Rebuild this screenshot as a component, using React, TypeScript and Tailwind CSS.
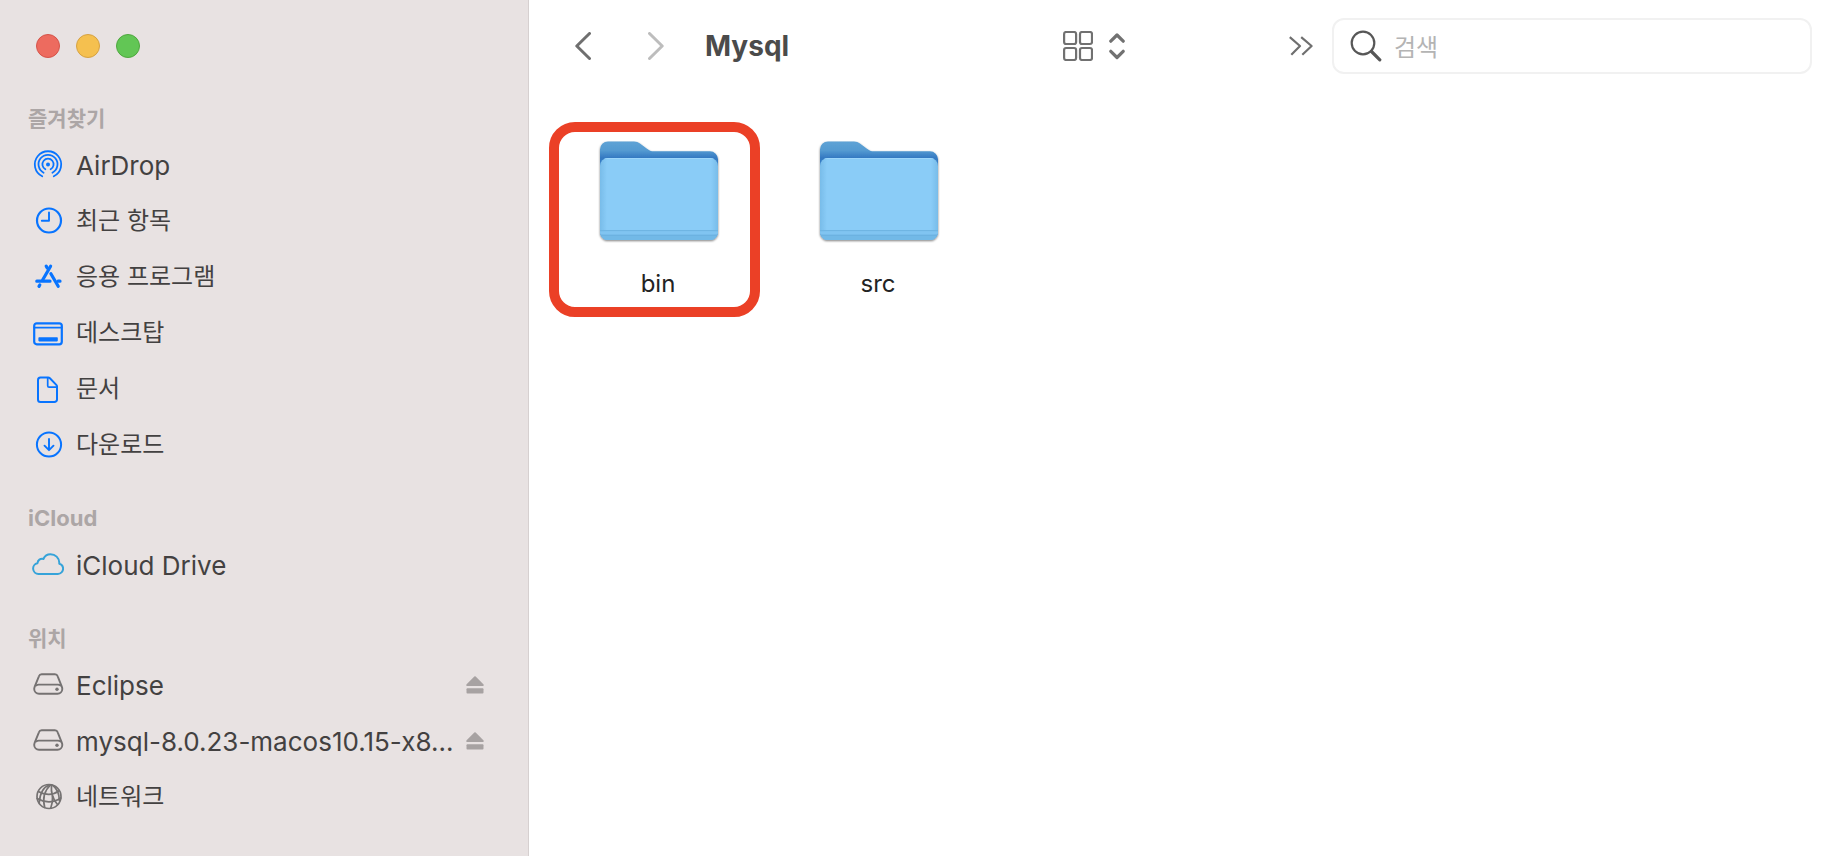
import type { ReactNode } from "react";
import { clsx } from "clsx";

type Item = {
  label: string;
  icon: ReactNode;
  latin?: boolean;
  ejectable?: boolean;
};

type Section = {
  title: string;
  latin?: boolean;
  items: Item[];
};

function Icon({ children, className }: { children: ReactNode; className?: string }) {
  return (
    <svg
      viewBox="0 0 32 32"
      fill="none"
      stroke="currentColor"
      strokeWidth="2.2"
      strokeLinecap="round"
      strokeLinejoin="round"
      className={clsx("size-8 shrink-0", className)}
      aria-hidden="true"
    >
      {children}
    </svg>
  );
}

function AirDropIcon() {
  return (
    <Icon className="text-[#0874ff]">
      <g strokeWidth="1.8">
        <path d="M10.2 27.3A13.200 13.200 0 1 1 21.800 27.300" />
        <path d="M11.600 23.700A9.500 9.500 0 1 1 20.400 23.700" />
        <path d="M13.400 20.200A5.600 5.600 0 1 1 18.600 20.200" />
      </g>
      <circle cx="16" cy="15.400" r="2" fill="currentColor" stroke="none" />
    </Icon>
  );
}

function ClockIcon() {
  return (
    <Icon className="text-[#0874ff]">
      <circle cx="17" cy="15.500" r="12" />
      <path d="M17 7.500v8.300H9.800" strokeWidth="1.900" />
    </Icon>
  );
}

function AppsIcon() {
  return (
    <Icon className="text-[#0874ff]">
      <g strokeWidth="3.200">
        <path d="M4.800 20.200h13.200M26 20.200h2" />
        <path d="M18.600 5.200L10.600 19" />
        <path d="M14.200 5.200l1 1.600M18.900 12.700L26.200 25.300" />
        <path d="M7.800 24l-.8 1.400" />
      </g>
    </Icon>
  );
}

function DesktopIcon() {
  return (
    <Icon className="text-[#0874ff]">
      <rect x="2.200" y="6.300" width="27.600" height="21" rx="2.500" />
      <path d="M2.500 10.600h27" strokeWidth="1.900" />
      <rect x="6.400" y="20.200" width="19.400" height="4.200" rx="0.800" fill="currentColor" stroke="none" />
    </Icon>
  );
}

function DocumentIcon() {
  return (
    <Icon className="text-[#0874ff]">
      <path
        d="M8.500 4.600h7.600c.8 0 1.300.2 1.800.7l6.400 6.600c.5.500.7 1 .7 1.700v12.800a2.600 2.600 0 0 1-2.600 2.600H8.500A2.600 2.600 0 0 1 6 26.400V7.200A2.600 2.600 0 0 1 8.500 4.600z"
        strokeWidth="2"
      />
      <path d="M15.700 4.800v8c0 .9.500 1.400 1.400 1.400h7.600" strokeWidth="1.700" />
    </Icon>
  );
}

function DownloadIcon() {
  return (
    <Icon className="text-[#0874ff]">
      <circle cx="17" cy="15.500" r="12.100" strokeWidth="2" />
      <path d="M17 10v10.700M12.500 16.700l4.500 4.500 4.500-4.500" strokeWidth="1.900" />
    </Icon>
  );
}

function CloudIcon() {
  return (
    <Icon className="text-[#36a3d9]">
      <path
        d="M6.500 24.900a5.400 5.400 0 0 1-1-10.700c.2-3 2.900-5 5.900-4.200C12.700 7 15.400 5.200 18.500 5.200c4.900 0 8.600 3.700 8.800 8.500v1c2.300.7 3.800 2.700 3.800 5a5.200 5.200 0 0 1-5.200 5.200z"
        strokeWidth="2"
      />
    </Icon>
  );
}

function DriveIcon() {
  return (
    <Icon className="text-[#757272]">
      <path
        d="M9.800 5.300h13a3 3 0 0 1 2.900 2l4 10c.4 1 .6 1.800.6 2.800A4.800 4.800 0 0 1 25.500 24.800H7a4.800 4.800 0 0 1-4.800-4.700c0-1 .2-1.800.6-2.800l4.100-10a3 3 0 0 1 2.900-2z"
        strokeWidth="1.900"
      />
      <path d="M4 16.500c.9-.6 1.700-.9 2.700-.9h19.200c1 0 1.800.3 2.700.9" strokeWidth="1.900" />
      <circle cx="25" cy="20.300" r="1.700" fill="currentColor" stroke="none" />
    </Icon>
  );
}

function GlobeIcon() {
  return (
    <Icon className="text-[#757272]">
      <g strokeWidth="1.700">
        <circle cx="17" cy="15.500" r="12" />
        <path d="M19.500 4C18.800 11 20.600 18 25.500 23.500" />
        <path d="M18.500 4C12 10 10.500 18 12.700 26.500" />
        <path d="M17.500 4C11.500 6 8 11 7.300 21.500" />
        <path d="M20.500 4.200c4 2.600 6.600 7 6.900 15.500" />
        <path d="M20.500 15c.4 4.500-.3 8.500-1.800 12.200" />
        <path d="M6.800 10.800c6 3.500 14.500 3.500 19.800-.8" />
        <path d="M5.200 17.500c7.500 4.300 16.300 4.300 23.600-.5" />
      </g>
    </Icon>
  );
}

const SECTIONS: Section[] = [
  {
    title: "즐겨찾기",
    items: [
      { label: "AirDrop", icon: <AirDropIcon />, latin: true },
      { label: "최근 항목", icon: <ClockIcon /> },
      { label: "응용 프로그램", icon: <AppsIcon /> },
      { label: "데스크탑", icon: <DesktopIcon /> },
      { label: "문서", icon: <DocumentIcon /> },
      { label: "다운로드", icon: <DownloadIcon /> },
    ],
  },
  {
    title: "iCloud",
    latin: true,
    items: [{ label: "iCloud Drive", icon: <CloudIcon />, latin: true }],
  },
  {
    title: "위치",
    items: [
      { label: "Eclipse", icon: <DriveIcon />, latin: true, ejectable: true },
      { label: "mysql-8.0.23-macos10.15-x8...", icon: <DriveIcon />, latin: true, ejectable: true },
      { label: "네트워크", icon: <GlobeIcon /> },
    ],
  },
];

const FOLDERS = [
  { name: "bin", highlighted: true },
  { name: "src", highlighted: false },
];

function WindowControls() {
  return (
    <div className="flex gap-4 px-9 pt-[34px]">
      <button type="button" aria-label="닫기" className="size-6 rounded-full border border-[#d5544a] bg-[#ed6b5f]" />
      <button type="button" aria-label="최소화" className="size-6 rounded-full border border-[#d6a243] bg-[#f5c04f]" />
      <button type="button" aria-label="확대" className="size-6 rounded-full border border-[#4fa73f] bg-[#62c655]" />
    </div>
  );
}

function SidebarRow({ item }: { item: Item }) {
  return (
    <li className="flex h-14 items-center pr-11 pl-8">
      <a href="#" className="flex min-w-0 flex-1 items-center gap-3">
        {item.icon}
        <span className={clsx("whitespace-nowrap text-[#434141]", item.latin ? "text-[26px]" : "text-2xl")}>
          {item.label}
        </span>
      </a>
      {item.ejectable && (
        <button type="button" aria-label={`${item.label} 추출`} className="shrink-0 text-[#a7a2a2]">
          <svg viewBox="0 0 18 18" fill="currentColor" className="size-[18px]" aria-hidden="true">
            <path d="M8.300.6a1 1 0 0 1 1.400 0l7.700 7.700c.7.800.4 1.700-.6 1.700H1.200C.2 10-.1 9.100.6 8.300z" />
            <rect x="0.500" y="12.300" width="17" height="5.200" rx="0.900" />
          </svg>
        </button>
      )}
    </li>
  );
}

function Sidebar() {
  return (
    <aside className="flex w-[529px] shrink-0 flex-col border-r border-[#d6d0d0] bg-[#e8e2e2]">
      <WindowControls />
      <nav className="mt-[39px] flex flex-col gap-6">
        {SECTIONS.map((section) => (
          <section key={section.title}>
            <h2
              className={clsx(
                "flex h-10 items-center px-7 pt-[3px] text-[#aca6a6]",
                section.latin ? "text-[22px] font-bold" : "text-[21px] font-semibold",
              )}
            >
              {section.title}
            </h2>
            <ul>
              {section.items.map((item) => (
                <SidebarRow key={item.label} item={item} />
              ))}
            </ul>
          </section>
        ))}
      </nav>
    </aside>
  );
}

function Toolbar() {
  return (
    <header className="flex items-center pt-[18px] pr-[14px] pl-[46px]">
      <button type="button" aria-label="뒤로" className="text-[#6f6f6f]">
        <svg viewBox="0 0 16 28" fill="none" stroke="currentColor" strokeWidth="3" strokeLinecap="round" strokeLinejoin="round" className="h-7 w-4">
          <path d="M14.500 1.500L1.800 14l12.700 12.500" />
        </svg>
      </button>
      <button type="button" aria-label="앞으로" className="ml-[57px] text-[#bdbdbd]">
        <svg viewBox="0 0 16 28" fill="none" stroke="currentColor" strokeWidth="3" strokeLinecap="round" strokeLinejoin="round" className="h-7 w-4">
          <path d="M1.500 1.500L14.200 14 1.500 26.500" />
        </svg>
      </button>
      <h1 className="ml-[41px] w-[358px] text-[28px] font-bold text-[#4b4b4b]">Mysql</h1>
      <button type="button" aria-label="보기 방식" className="flex items-center gap-4 text-[#717171]">
        <svg viewBox="0 0 30 30" fill="none" stroke="currentColor" strokeWidth="2.200" className="size-[30px]">
          <rect x="1.100" y="1" width="12" height="12" rx="2" />
          <rect x="17" y="1" width="12" height="12" rx="2" />
          <rect x="1.100" y="17" width="12" height="12" rx="2" />
          <rect x="17" y="17" width="12" height="12" rx="2" />
        </svg>
        <svg viewBox="0 0 16 28" fill="none" stroke="currentColor" strokeWidth="3.200" strokeLinecap="round" strokeLinejoin="round" className="h-7 w-4">
          <path d="M1.800 9.200L8 3l6.200 6.200M1.800 19.300L8 25.500l6.200-6.200" />
        </svg>
      </button>
      <button type="button" aria-label="더 보기" className="ml-auto text-[#6f6f6f]">
        <svg viewBox="0 0 24 20" fill="none" stroke="currentColor" strokeWidth="2.200" strokeLinejoin="round" className="h-5 w-6">
          <path d="M.8 1.200L11 10 2.300 18.800M12.200 1.200L22.600 10l-9.300 8.800" />
        </svg>
      </button>
      <label className="ml-[19px] flex h-14 w-[480px] items-center gap-3 rounded-xl border-2 border-[#f1f1f1] px-4">
        <svg viewBox="0 0 32 32" fill="none" stroke="#575757" className="size-8 shrink-0" aria-hidden="true">
          <circle cx="13" cy="13" r="11.300" strokeWidth="2.200" />
          <path d="M21.500 21.500l8.300 8.300" strokeWidth="3.200" strokeLinecap="round" />
        </svg>
        <input
          type="search"
          aria-label="검색"
          placeholder="검색"
          className="min-w-0 flex-1 bg-transparent pt-1 text-2xl text-[#434141] outline-none placeholder:text-[#b4b4b4]"
        />
      </label>
    </header>
  );
}

function FolderIcon() {
  return (
    <svg viewBox="0 0 122 104" className="h-[104px] w-[122px]" aria-hidden="true">
      <defs>
        <linearGradient id="folder-back" x1="0" y1="0" x2="0" y2="24" gradientUnits="userSpaceOnUse">
          <stop offset="0" stopColor="#5fa3d6" />
          <stop offset="0.400" stopColor="#549ad1" />
          <stop offset="0.700" stopColor="#3479c2" />
          <stop offset="1" stopColor="#3a7fc6" />
        </linearGradient>
        <linearGradient id="folder-front" x1="0" y1="0" x2="1" y2="0">
          <stop offset="0" stopColor="#78bce9" />
          <stop offset="0.060" stopColor="#8accf7" />
          <stop offset="0.940" stopColor="#8accf7" />
          <stop offset="1" stopColor="#78bce9" />
        </linearGradient>
        <clipPath id="folder-clip">
          <rect x="2" y="17" width="118" height="82" rx="8" />
        </clipPath>
        <filter id="folder-shadow" x="-5%" y="-5%" width="110%" height="115%">
          <feDropShadow dx="0" dy="1" stdDeviation="1.200" floodColor="#000" floodOpacity="0.500" />
        </filter>
      </defs>
      <g filter="url(#folder-shadow)">
        <path
          d="M2 8.500A8 8 0 0 1 10 .5h26c2.500 0 4.300.8 6 2l7 5.200c2 1.600 4 2.600 7 2.600h56a8 8 0 0 1 8 8V91a8 8 0 0 1-8 8H10a8 8 0 0 1-8-8z"
          fill="url(#folder-back)"
        />
        <rect x="2" y="17" width="118" height="82" rx="8" fill="url(#folder-front)" />
      </g>
      <g clipPath="url(#folder-clip)">
        <path d="M2 17.500h118" stroke="#9dd6fa" />
        <rect x="2" y="89" width="118" height="1.500" fill="#6fb5e3" />
        <rect x="2" y="90.500" width="118" height="3" fill="#80c4f1" />
        <rect x="2" y="93.500" width="118" height="1.500" fill="#6cb2e1" />
        <rect x="2" y="95" width="118" height="4" fill="#72b9e7" />
      </g>
    </svg>
  );
}

function Folder({ name, highlighted }: { name: string; highlighted: boolean }) {
  return (
    <li className="relative h-[195px] w-[220px]">
      <button type="button" className="flex w-full flex-col items-center pt-[19px]">
        <FolderIcon />
        <span className="mt-[21px] pr-0.5 text-2xl leading-9 text-[#232323]">{name}</span>
      </button>
      {highlighted && (
        <span className="pointer-events-none absolute inset-y-0 left-0 w-[211px] rounded-[26px] border-10 border-[#eb4026]" />
      )}
    </li>
  );
}

export default function App() {
  return (
    <div className="flex min-h-screen bg-white font-['Inter','Noto_Sans_CJK_KR',sans-serif]">
      <Sidebar />
      <main className="min-w-0 flex-1">
        <Toolbar />
        <ul className="mt-12 flex flex-wrap pl-5">
          {FOLDERS.map((folder) => (
            <Folder key={folder.name} name={folder.name} highlighted={folder.highlighted} />
          ))}
        </ul>
      </main>
    </div>
  );
}
